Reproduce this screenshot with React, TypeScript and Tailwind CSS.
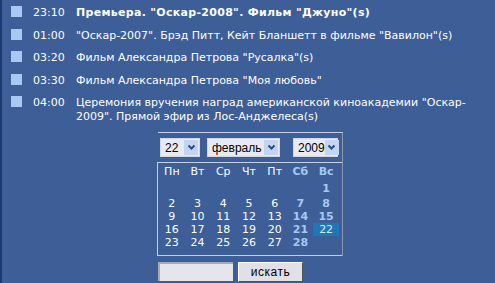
const items = [
  { time: "23:10", text: 'Премьера. "Оскар-2008". Фильм "Джуно"(s)', bold: true },
  { time: "01:00", text: '"Оскар-2007". Брэд Питт, Кейт Бланшетт в фильме "Вавилон"(s)' },
  { time: "03:20", text: 'Фильм Александра Петрова "Русалка"(s)' },
  { time: "03:30", text: 'Фильм Александра Петрова "Моя любовь"' },
  {
    time: "04:00",
    text: 'Церемония вручения наград американской киноакадемии "Оскар-\u200B2009". Прямой эфир из Лос-Анджелеса(s)',
  },
];

const days = ["Пн", "Вт", "Ср", "Чт", "Пт", "Сб", "Вс"];

// February 2009 starts on a Sunday
const cells: (number | null)[] = [null, null, null, null, null, null];
for (let d = 1; d <= 28; d++) cells.push(d);
while (cells.length % 7) cells.push(null);

const Arrow = () => (
  <span className="w-[14px] h-[15px] bg-[#c3d5f3] flex items-center justify-center shrink-0">
    <svg width="9" height="7" viewBox="0 0 9 7">
      <polyline points="1.5,1.5 4.5,4.5 7.5,1.5" fill="none" stroke="#2b4c8c" strokeWidth="2" />
    </svg>
  </span>
);

const FakeSelect = ({ value, width }: { value: string; width: string }) => (
  <div
    className={`${width} h-[19px] bg-[#e9e9f0] border border-[#cfd6e4] flex items-center justify-between pl-[4px] pr-[1px] text-black text-[12px] font-['Liberation_Sans',sans-serif]`}
  >
    <span>{value}</span>
    <Arrow />
  </div>
);

export default function App() {
  return (
    <div className="w-[495px] h-[283px] overflow-hidden bg-[#3d5e97] border-l-2 border-[#1b3a74] text-white font-['DejaVu_Sans',sans-serif]">
      <ul className="pt-[6px] pl-[9px] pr-[12px] flex flex-col gap-[8.6px]">
        {items.map((it) => (
          <li key={it.time} className="flex text-[11px] leading-[14px]">
            <span className="w-[11px] h-[11px] mt-0 bg-[#a9c9f2] shrink-0" />
            <span className="ml-[11px] w-[43px] shrink-0">{it.time}</span>
            <span className={it.bold ? "font-bold tracking-[0.3px]" : ""}>{it.text}</span>
          </li>
        ))}
      </ul>

      <div className="ml-[156px] mt-[8px] w-[185px] border-t border-t-[#c4cee2] border-r border-r-[#8d97ab]">
        <div className="flex pt-[5px] pl-[2px]">
          <FakeSelect value="22" width="w-[40px]" />
          <div className="ml-[7px]">
            <FakeSelect value="февраль" width="w-[73px]" />
          </div>
          <div className="ml-[13px]">
            <FakeSelect value="2009" width="w-[45px]" />
          </div>
        </div>

        <div className="mt-[5px] -ml-[1px] border-l border-t border-b border-[#c8d0e0] pt-[1px] pb-[6px]">
          <div className="ml-[1px] w-[180px] grid grid-cols-7 grid-rows-[16px_16px_14px_13px_13px_13px] text-[11px] text-center">
            {days.map((d, i) => (
              <div
                key={d}
                className={`flex items-center justify-center ${i >= 5 ? "font-bold text-[#a6c8f2]" : ""}`}
              >
                {d}
              </div>
            ))}
            {cells.map((c, i) => {
              const weekend = i % 7 >= 5;
              const today = c === 22;
              return (
                <div
                  key={i}
                  className={`flex items-center justify-center leading-none ${
                    today ? "bg-[#2276b6] text-[#d8ecff]" : weekend ? "font-bold text-[#a6c8f2]" : ""
                  }`}
                >
                  {c ?? ""}
                </div>
              );
            })}
          </div>
        </div>
      </div>

      <div className="ml-[156px] mt-[6px] flex gap-[5px] font-['Liberation_Sans',sans-serif]">
        <div className="w-[75px] h-[19px] bg-[#e5e5ec] border-t-2 border-l-2 border-[#a8abb4]" />
        <button className="w-[65px] h-[20px] bg-[#e0e0e6] border border-t-white border-l-white border-r-[#555] border-b-[#555] text-black text-[12px] tracking-[0.5px]">
          искать
        </button>
      </div>
    </div>
  );
}
